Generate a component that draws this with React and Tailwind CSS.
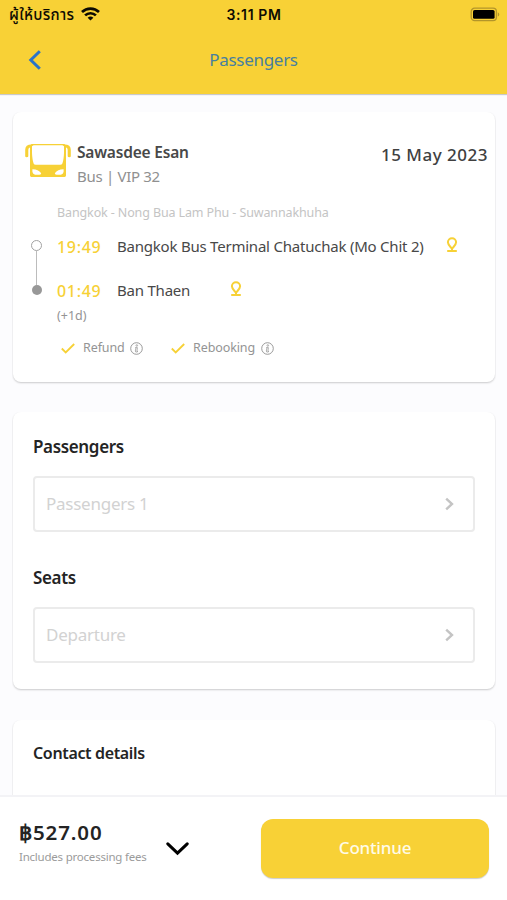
import clsx from 'clsx';

const stops = [
  { time: '19:49', name: 'Bangkok Bus Terminal Chatuchak (Mo Chit 2)', nameWidth: 'w-[329px]' },
  { time: '01:49', name: 'Ban Thaen', nameWidth: 'w-[113px]' },
];

const fields = [
  { title: 'Passengers', placeholder: 'Passengers 1' },
  { title: 'Seats', placeholder: 'Departure' },
];

const WifiIcon = () => (
  <svg className="ml-[5px] h-[14px] w-[19px] shrink-0" viewBox="0 0 19 14" fill="none" stroke="#0d0b02" strokeWidth="2.7">
    <path d="M1 5.1a12.3 12.3 0 0 1 17 0" />
    <path d="M4.1 8.4a7.8 7.8 0 0 1 10.8 0" />
    <path d="M6.6 10.8a4.2 4.2 0 0 1 5.8 0L9.5 13.6z" fill="#0d0b02" stroke="none" />
  </svg>
);

const BatteryIcon = () => (
  <svg className="h-[15px] w-[31px]" viewBox="0 0 31 15" fill="none">
    <rect x="1.2" y="1.2" width="25.2" height="12.4" rx="3.4" stroke="#b3952a" strokeWidth="1.3" />
    <rect x="3" y="3" width="21.6" height="8.8" rx="1.6" fill="#000" />
    <path d="M27.8 5.2c2 .8 2 3.6 0 4.4z" fill="#b3952a" />
  </svg>
);

const BusIcon = () => (
  <svg className="h-[35px] w-[46px]" viewBox="0 0 46 35" fill="#f7d136">
    <path
      fillRule="evenodd"
      d="M6.6 1H39.4L41 2.6V32.6q0 1.4-1.4 1.4H6.4Q5 34 5 32.6V2.6zM7 3.2V10q.3 7 1.6 10.4.5 1.4 2.2 1.4h24.4q1.7 0 2.2-1.4Q38.7 17 39 10V3.2L37.4 2.2H8.6zM7.4 26.2q5.6-.2 8.8 4-.4 1.6-2 1.6H10q-2.6-.8-2.6-3zM38.6 26.2q-5.6-.2-8.8 4 .4 1.6 2 1.6H36q2.6-.8 2.6-3z"
    />
    <path d="M6.6 1.6Q.2 1.6.2 6.8v6.4q0 1 1.5 1t1.6-1V6.8Q3.3 4.4 5.6 4.2zM39.4 1.6q6.4 0 6.4 5.2v6.4q0 1-1.5 1t-1.6-1V6.8q0-2.4-2.3-2.6z" />
  </svg>
);

const PinIcon = () => (
  <svg className="h-[16px] w-[12px]" viewBox="0 0 12 16" fill="none" stroke="#f7d136" strokeWidth="2">
    <path d="M6 11.7C4.4 9.7 1.9 7.9 1.9 5.3a4.1 4.1 0 0 1 8.2 0C10.1 7.9 7.6 9.7 6 11.7z" />
    <path d="M6 11v3M1.2 14h9.6" />
  </svg>
);

const CheckIcon = () => (
  <svg className="h-[11px] w-[14px]" viewBox="0 0 14 11" fill="none" stroke="#f7d136" strokeWidth="1.8">
    <path d="M.8 5.5 4.7 9.4 13.2 1" />
  </svg>
);

const InfoIcon = () => (
  <svg className="h-[13px] w-[13px]" viewBox="0 0 13 13" fill="none" stroke="#8f8f8f">
    <circle cx="6.5" cy="6.5" r="5.8" strokeWidth=".9" />
    <circle cx="6.8" cy="3.5" r=".8" strokeWidth=".7" />
    <path d="M5.1 5.6h2.3L6.9 9.4h1M6 5.8 5.3 9q0 1.2 1.3 1.1l1.2-.5" strokeWidth=".7" />
  </svg>
);

const Card = ({ className, children }) => (
  <section
    className={clsx(
      'ml-[13px] mr-[12px] rounded-lg bg-white shadow-[0_1px_2px_rgba(0,0,0,0.2)] [clip-path:inset(0_-1px_-4px_-1px)]',
      className
    )}
  >
    {children}
  </section>
);

const Header = () => (
  <header className="relative h-[94px] shrink-0 bg-[#f8d136] shadow-[0_1px_1px_rgba(0,0,0,0.2)]">
    <div className="grid h-[28px] grid-cols-3 items-center pl-[9px] pr-[6px] text-[#0d0b02]">
      <div className="flex items-center">
        <span className="w-[67px] whitespace-nowrap font-['Noto_Sans','Noto_Sans_Thai',sans-serif] text-[15px] font-medium leading-5 tracking-[0.3px]">
          ผู้ให้บริการ
        </span>
        <WifiIcon />
      </div>
      <span className="-ml-[2px] whitespace-nowrap text-center font-[Inter,sans-serif] text-[14px] font-semibold tracking-[0.6px]">
        3:11 PM
      </span>
      <div className="flex justify-end">
        <BatteryIcon />
      </div>
    </div>
    <div className="grid h-[64px] grid-cols-3 items-center">
      <button className="pl-[28px]">
        <svg className="h-[20px] w-[14px]" viewBox="0 0 14 20" fill="none" stroke="#2a73c8" strokeWidth="3">
          <path d="M11.8 1.2 2.8 10l9 8.8" />
        </svg>
      </button>
      <h1 className="text-center text-[17px] leading-6 tracking-[-0.3px] text-[#477f9f]">Passengers</h1>
    </div>
  </header>
);

const TripCard = () => (
  <Card className="mt-[18px] h-[270px] pt-[28px]">
    <div className="flex h-[48px] pl-[12px] pr-[7px]">
      <div className="pt-[3px]">
        <BusIcon />
      </div>
      <div className="ml-[6px] flex-1 whitespace-nowrap">
        <p className="text-[15.5px] font-semibold leading-6 tracking-[-0.2px] text-[#484848]">Sawasdee Esan</p>
        <p className="text-[15px] leading-6 tracking-[-0.3px] text-[#909090]">Bus | VIP 32</p>
      </div>
      <p className="mt-[3px] whitespace-nowrap text-[17px] font-medium leading-6 tracking-[0.5px] text-[#404040]">
        15 May 2023
      </p>
    </div>

    <p className="mt-[15px] h-[20px] whitespace-nowrap pl-[44px] text-[12.5px] leading-5 tracking-[-0.12px] text-[#c4c4c4]">
      Bangkok - Nong Bua Lam Phu - Suwannakhuha
    </p>

    <div className="flex pl-[18px]">
      <div className="mt-[17px] flex h-[55px] w-[11px] flex-col items-center">
        <span className="size-[11px] shrink-0 rounded-full border-[1.5px] border-[#a2a2a2]" />
        <span className="w-[1.5px] flex-1 bg-[#bcbcbc]" />
        <span className="size-[10px] shrink-0 rounded-full bg-[#989898]" />
      </div>
      <div className="ml-[15px]">
        {stops.map((stop) => (
          <div key={stop.time} className="flex h-[44px] items-center whitespace-nowrap">
            <span className="mt-[3px] w-[60px] text-[16px] font-medium tracking-[0.7px] text-[#f7d136]">
              {stop.time}
            </span>
            <span className={clsx('pt-[2px] text-[15px] tracking-[-0.22px] text-[#484848]', stop.nameWidth)}>
              {stop.name}
            </span>
            <PinIcon />
          </div>
        ))}
      </div>
    </div>

    <p className="-mt-[5px] pl-[44px] text-[12.5px] leading-5 text-[#949494]">(+1d)</p>

    <div className="mt-[12px] flex h-[20px] items-center whitespace-nowrap pl-[48px] text-[12.5px] leading-5 tracking-[-0.1px] text-[#949494]">
      <CheckIcon />
      <span className="ml-[8px] w-[47px]">Refund</span>
      <InfoIcon />
      <span className="ml-[28px]">
        <CheckIcon />
      </span>
      <span className="ml-[8px] w-[68px]">Rebooking</span>
      <InfoIcon />
    </div>
  </Card>
);

const Field = ({ title, placeholder }) => (
  <div className="mb-[34px]">
    <h2 className="text-[17px] font-semibold leading-6 tracking-[-0.35px] text-[#242424]">{title}</h2>
    <div className="mt-[17px] flex h-[56px] items-center justify-between rounded-[4px] border-2 border-[#ebebeb] pl-[11px] pr-[19px]">
      <span className="text-[17px] tracking-[-0.25px] text-[#d2d2d2]">{placeholder}</span>
      <svg className="h-[14px] w-[9px]" viewBox="0 0 9 14" fill="none" stroke="#c4c4c4" strokeWidth="2.4">
        <path d="M1.2 1.6 7 7l-5.8 5.4" />
      </svg>
    </div>
  </div>
);

const Footer = () => (
  <footer className="relative flex h-[105px] shrink-0 border-t-2 border-[#f3f3f6] bg-white pl-[19px] pr-[18px]">
    <div className="w-[147px] whitespace-nowrap pt-[20px]">
      <p className="text-[20.5px] font-semibold leading-[30px] tracking-[0.9px] text-[#242424]">฿527.00</p>
      <p className="text-[11.5px] leading-5 tracking-[-0.22px] text-[#9b9b9b]">Includes processing fees</p>
    </div>
    <svg className="mt-[45px] h-[14px] w-[23px]" viewBox="0 0 23 14" fill="none" stroke="#000" strokeWidth="3" strokeLinecap="round">
      <path d="M1.8 1.8 11.5 11.2 21.2 1.8" />
    </svg>
    <button className="ml-auto mt-[22px] h-[59px] w-[228px] rounded-[12px] bg-[#f8d136] pb-[2px] text-[17px] font-medium tracking-[-0.2px] text-[#fffbe8] shadow-[0_1px_1px_rgba(0,0,0,0.2)]">
      Continue
    </button>
  </footer>
);

const App = () => {
  return (
    <div className="flex h-[900px] w-[507px] flex-col overflow-hidden bg-[#fcfcfe] font-['Noto_Sans',sans-serif]">
      <Header />
      <main className="min-h-0 flex-1 overflow-hidden">
        <TripCard />
        <Card className="mt-[30px] h-[277px] px-[20px] pt-[23px]">
          {fields.map((field) => (
            <Field key={field.title} {...field} />
          ))}
        </Card>
        <Card className="mt-[31px] h-[200px] px-[20px] pt-[21px]">
          <h2 className="text-[16px] font-semibold leading-6 tracking-[-0.35px] text-[#242424]">Contact details</h2>
        </Card>
      </main>
      <Footer />
    </div>
  );
};

export default App;
